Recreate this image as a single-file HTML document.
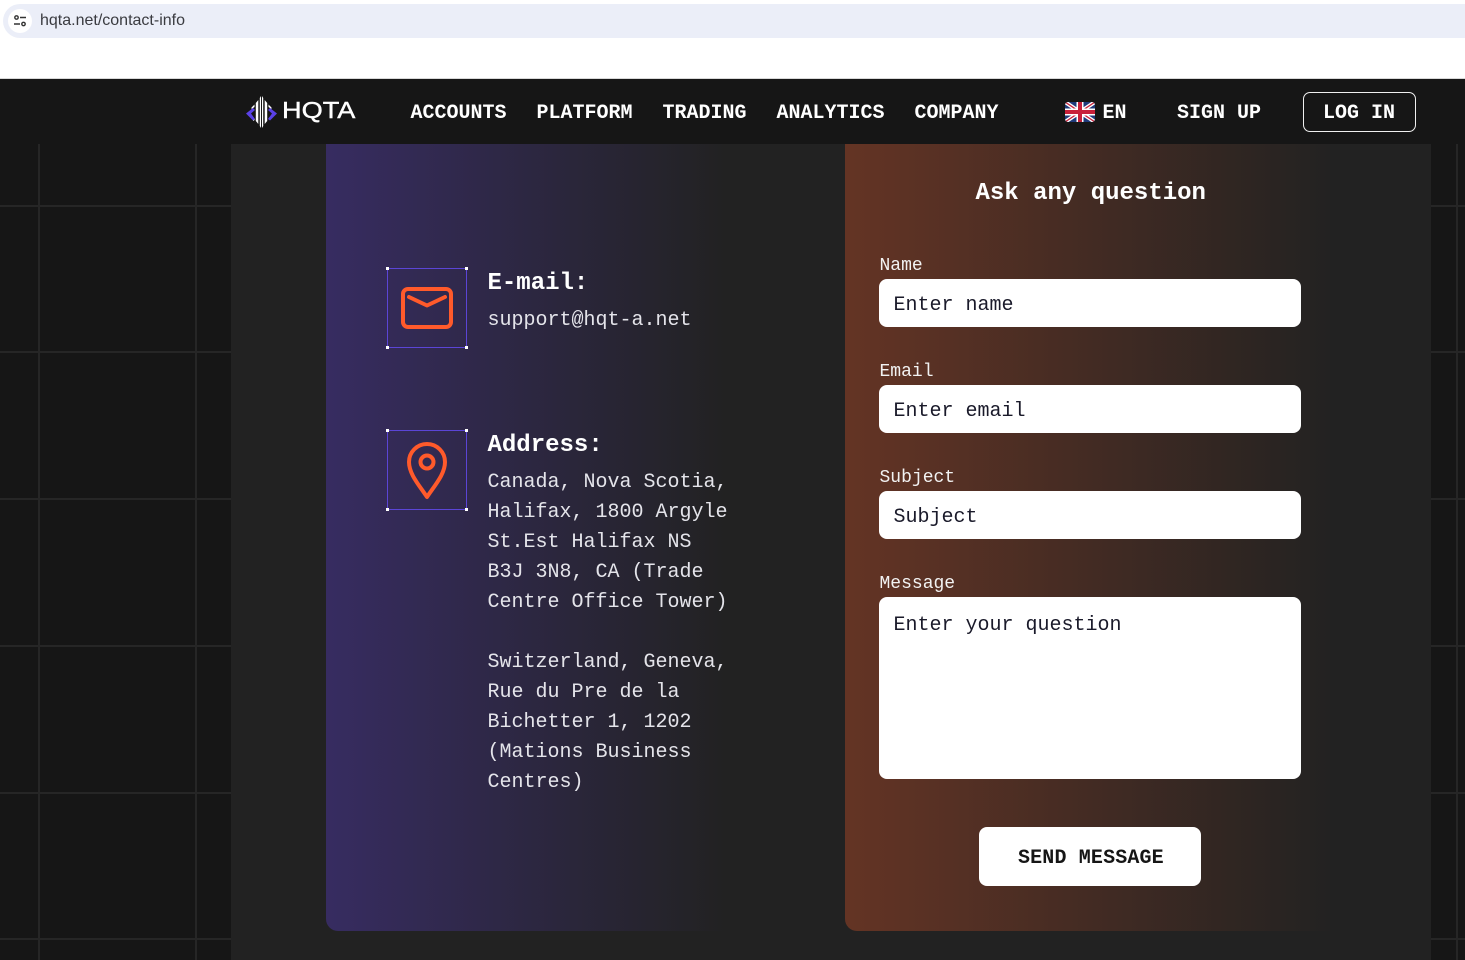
<!DOCTYPE html>
<html lang="en">
<head>
<meta charset="utf-8">
<title>HQTA Contact Info</title>
<style>
html,body{margin:0;padding:0;width:1465px;height:960px;overflow:hidden;background:#161616}
body{position:relative;font-family:"Liberation Mono",monospace}
.a{position:absolute;white-space:pre}
.h{background:#262626;position:absolute}
.nav{font-size:20px;font-weight:700;color:#fff;line-height:24px;top:102px}
.lab{font-size:18px;color:#f2f2f2;line-height:22px;left:879.5px}
.inp{position:absolute;left:879px;width:422px;background:#fff;border-radius:8px;height:48px}
.ph{font-size:20px;color:#1a1a2a;line-height:24px;left:893.5px}
.t{font-size:20px;color:#e4e4ea;line-height:30px;left:487.5px}
.hd{font-size:24px;font-weight:700;color:#fff;line-height:30px;left:487.5px}
.box{position:absolute;left:387px;width:78px;height:78px;border:1px solid #5b45d6}
.box i{position:absolute;width:3px;height:3px;background:#fff}
</style>
</head>
<body>
<div style="position:absolute;left:0;top:0;width:1465px;height:78px;background:#fff"></div>
<div style="position:absolute;left:3px;top:4px;width:1480px;height:34px;border-radius:17px;background:#ebeef8"></div>
<div style="position:absolute;left:8px;top:9px;width:24px;height:24px;border-radius:12px;background:#fff"></div>
<svg style="position:absolute;left:13px;top:14px" width="14" height="14" viewBox="0 0 14 14" fill="none" stroke="#333" stroke-width="1.4"><circle cx="3.5" cy="3.5" r="1.7"/><path d="M7 3.5h6M1 10h6"/><circle cx="10.5" cy="10" r="1.7"/></svg>
<div class="a" style="left:40px;top:12px;font:16px/18px 'Liberation Sans',sans-serif;color:#3a3b40">hqta.net/contact-info</div>
<div style="position:absolute;left:0;top:78px;width:1465px;height:1px;background:#d8d8d8"></div>

<div class="h" style="left:38px;top:144px;width:2px;height:816px"></div>
<div class="h" style="left:195px;top:144px;width:2px;height:816px"></div>
<div class="h" style="left:1456px;top:144px;width:2px;height:816px"></div>
<div class="h" style="left:0;top:205px;width:1465px;height:2px"></div>
<div class="h" style="left:0;top:351px;width:1465px;height:2px"></div>
<div class="h" style="left:0;top:498px;width:1465px;height:2px"></div>
<div class="h" style="left:0;top:645px;width:1465px;height:2px"></div>
<div class="h" style="left:0;top:792px;width:1465px;height:2px"></div>
<div class="h" style="left:0;top:938px;width:1465px;height:2px"></div>

<div style="position:absolute;left:231px;top:144px;width:1200px;height:816px;background:#222"></div>
<div style="position:absolute;left:326px;top:144px;width:400px;height:787px;border-radius:0 0 0 12px;background:linear-gradient(90deg,#372c61 0%,#222 100%)"></div>
<div style="position:absolute;left:845px;top:144px;width:490px;height:787px;border-radius:0 0 0 12px;background:linear-gradient(90deg,#643424 0%,#222 100%)"></div>

<svg style="position:absolute;left:245px;top:95px" width="34" height="34" viewBox="0 0 34 34">
<path d="M1 18.500L8 13L10 15L6 18.500L10 24L8 25.500ZM32 18.500L25 13L23 15L27 18.500L23 24L25 25.500Z" fill="#5a41e6"/>
<path d="M14.800 3L16 1V33L14.800 31ZM17 1L18.200 3V31L17 33ZM10.800 8L13.300 5V29L10.800 26ZM19.700 5L22.200 8V26L19.700 29ZM6.500 12.500L9.500 9.500V12L6.500 14ZM26.500 12.500L23.500 9.500V12L26.500 14ZM8 25.500L9.500 24V25L8.500 26Z" fill="#fff"/>
</svg>
<div class="a" style="left:282px;top:95px;font:23px/30px 'Liberation Sans',sans-serif;color:#fff;transform:scaleX(1.18);transform-origin:left center;-webkit-text-stroke:.4px #fff">HQTA</div>

<div class="a nav" style="left:410.5px">ACCOUNTS</div>
<div class="a nav" style="left:536.5px">PLATFORM</div>
<div class="a nav" style="left:662.5px">TRADING</div>
<div class="a nav" style="left:776.5px">ANALYTICS</div>
<div class="a nav" style="left:914.5px">COMPANY</div>
<svg style="position:absolute;left:1065px;top:102px;border-radius:3px" width="30" height="20" viewBox="0 0 30 20">
<rect width="30" height="20" fill="#1f3a7a"/>
<path d="M0 0L30 20M30 0L0 20" stroke="#fff" stroke-width="4"/>
<path d="M0 0L30 20M30 0L0 20" stroke="#c8203a" stroke-width="1.300"/>
<path d="M15 0V20M0 10H30" stroke="#fff" stroke-width="7"/>
<path d="M15 0V20M0 10H30" stroke="#c8203a" stroke-width="4"/>
</svg>
<div class="a nav" style="left:1102.5px">EN</div>
<div class="a nav" style="left:1177px">SIGN UP</div>
<div style="position:absolute;left:1303px;top:92px;width:111px;height:38px;border:1px solid #f0f0f0;border-radius:7px"></div>
<div class="a nav" style="left:1323px">LOG IN</div>

<div class="box" style="top:268px"><i style="left:-2px;top:-2px"></i><i style="right:-2px;top:-2px"></i><i style="left:-2px;bottom:-2px"></i><i style="right:-2px;bottom:-2px"></i></div>
<svg style="position:absolute;left:400px;top:286px" width="54" height="44" viewBox="0 0 54 44" fill="none" stroke="#ff5a2b" stroke-width="4" stroke-linecap="round" stroke-linejoin="round">
<rect x="3" y="3" width="48" height="38" rx="5"/>
<path d="M9 11L27 19.500L45 11"/>
</svg>
<div class="a hd" style="top:269px">E-mail:</div>
<div class="a t" style="top:306px">support@hqt-a.net</div>

<div class="box" style="top:430px"><i style="left:-2px;top:-2px"></i><i style="right:-2px;top:-2px"></i><i style="left:-2px;bottom:-2px"></i><i style="right:-2px;bottom:-2px"></i></div>
<svg style="position:absolute;left:405px;top:441px" width="44" height="60" viewBox="0 0 44 60" fill="none" stroke="#ff5a2b" stroke-width="4">
<path d="M22 56C14 44 4 33 4 21A18 18 0 0 1 40 21C40 33 30 44 22 56Z" stroke-linejoin="round"/>
<circle cx="22" cy="21" r="6.500"/>
</svg>
<div class="a hd" style="top:431px">Address:</div>
<div class="a t" style="top:468px">Canada, Nova Scotia,
Halifax, 1800 Argyle
St.Est Halifax NS
B3J 3N8, CA (Trade
Centre Office Tower)

Switzerland, Geneva,
Rue du Pre de la
Bichetter 1, 1202
(Mations Business
Centres)</div>

<div class="a" style="left:975.5px;top:179px;font-size:24px;font-weight:700;color:#fff;line-height:30px">Ask any question</div>

<div class="a lab" style="top:255px">Name</div>
<div class="inp" style="top:279px"></div>
<div class="a ph" style="top:294px">Enter name</div>

<div class="a lab" style="top:361px">Email</div>
<div class="inp" style="top:385px"></div>
<div class="a ph" style="top:400px">Enter email</div>

<div class="a lab" style="top:467px">Subject</div>
<div class="inp" style="top:491px"></div>
<div class="a ph" style="top:506px">Subject</div>

<div class="a lab" style="top:573px">Message</div>
<div class="inp" style="top:597px;height:182px"></div>
<div class="a ph" style="top:614px">Enter your question</div>

<div style="position:absolute;left:979px;top:827px;width:222px;height:59px;background:#fff;border-radius:8px"></div>
<div class="a" style="left:1018px;top:847px;font-size:20px;font-weight:700;color:#161616;line-height:24px;letter-spacing:.15px">SEND MESSAGE</div>
</body>
</html>
